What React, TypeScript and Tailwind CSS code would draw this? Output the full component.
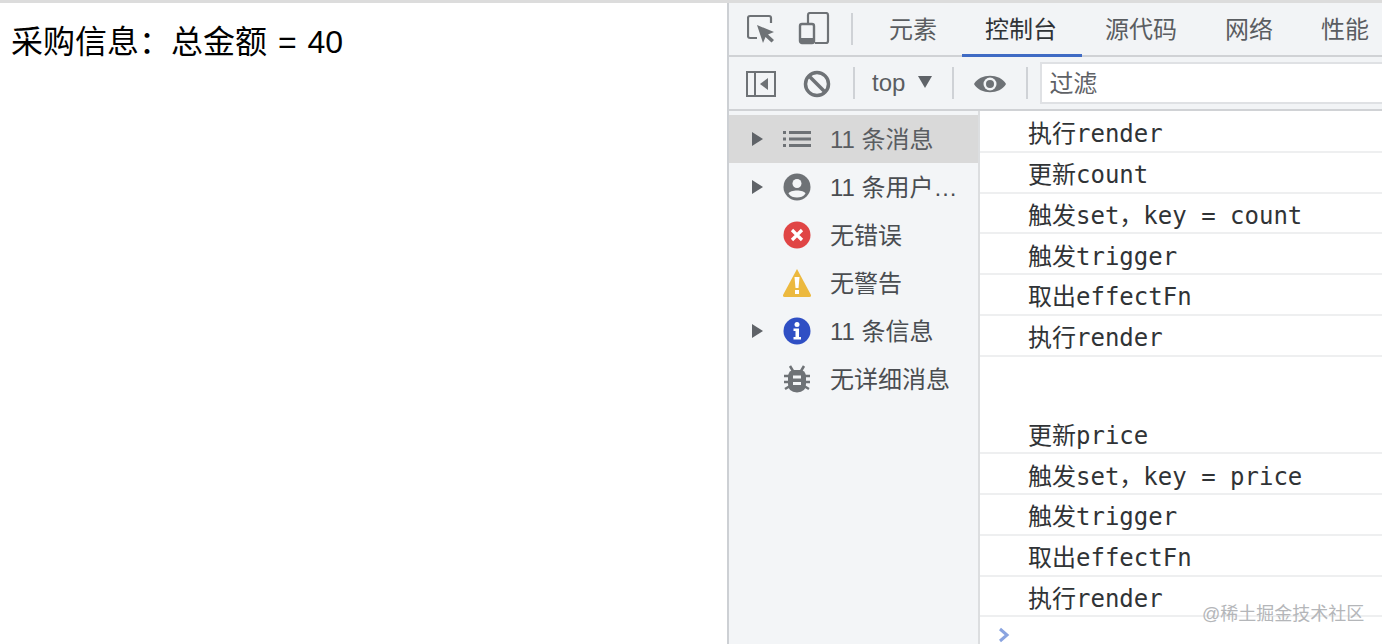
import React from "react";

const cjk = '"Liberation Sans","Noto Sans CJK SC",sans-serif';
const mono = '"DejaVu Sans Mono","Noto Sans CJK SC",monospace';

const Arrow = ({ on }: { on?: boolean }) => (
  <svg width="11" height="14" viewBox="0 0 11 14" className="shrink-0">
    {on && <path d="M0 0 L11 7 L0 14 Z" fill="#5f6368" />}
  </svg>
);

const IconList = () => (
  <svg width="28" height="28" viewBox="0 0 28 28">
    <g fill="#6e7276">
      <rect x="0" y="6" width="3" height="3" />
      <rect x="0" y="12.500" width="3" height="3" />
      <rect x="0" y="19" width="3" height="3" />
      <rect x="6" y="6" width="22" height="3" />
      <rect x="6" y="12.500" width="22" height="3" />
      <rect x="6" y="19" width="22" height="3" />
    </g>
  </svg>
);
const IconUser = () => (
  <svg width="28" height="28" viewBox="0 0 28 28">
    <circle cx="14" cy="14" r="13.500" fill="#6e7276" />
    <circle cx="14" cy="10.500" r="4.500" fill="#f3f5f7" />
    <path d="M5.500 20.500 C7 16.500 21 16.500 22.500 20.500 C20.500 23.500 17.500 24.500 14 24.500 C10.500 24.500 7.500 23.500 5.500 20.500 Z" fill="#f3f5f7" />
  </svg>
);
const IconError = () => (
  <svg width="28" height="28" viewBox="0 0 28 28">
    <circle cx="14" cy="14" r="13.500" fill="#e04545" />
    <path d="M9 9 L19 19 M19 9 L9 19" stroke="#fff" strokeWidth="3.200" />
  </svg>
);
const IconWarn = () => (
  <svg width="30" height="30" viewBox="0 0 30 30">
    <path d="M15 1 L29 27 Q29.500 29 27.500 29 L2.500 29 Q0.500 29 1 27 Z" fill="#ecb93f" />
    <path d="M12.500 9 L17.500 9 L16.500 20 L13.500 20 Z" fill="#fff" />
    <rect x="13" y="22" width="4" height="4" fill="#fff" />
  </svg>
);
const IconInfo = () => (
  <svg width="28" height="28" viewBox="0 0 28 28">
    <circle cx="14" cy="14" r="13.500" fill="#2f4fc4" />
    <circle cx="14" cy="7.500" r="2.500" fill="#fff" />
    <path d="M10.500 11.500 H16 V20 H18 V22.500 H10.500 V20 H12.500 V14 H10.500 Z" fill="#fff" />
  </svg>
);
const IconBug = () => (
  <svg width="28" height="28" viewBox="0 0 28 28">
    <g stroke="#6e7276" strokeWidth="2.500" fill="none">
      <path d="M7 1 L10 6 M21 1 L18 6" />
      <path d="M1 11 H27 M1 17 H27 M2 24 L7 21 M26 24 L21 21" />
    </g>
    <path d="M9 5 H19 Q23 7 23 12 V19 Q23 27 14 27.500 Q5 27 5 19 V12 Q5 7 9 5 Z" fill="#6e7276" />
    <rect x="10" y="10.500" width="8" height="3" fill="#f3f5f7" />
    <rect x="10" y="17" width="8" height="3" fill="#f3f5f7" />
  </svg>
);

const Divider = () => <div className="w-[2px] h-[32px] bg-[#cfd2d6] shrink-0" />;

const SideRow = ({ arrow, icon, text, selected }: { arrow?: boolean; icon: React.ReactNode; text: string; selected?: boolean }) => (
  <div className={`h-[48px] flex items-center pl-[23px] ${selected ? "bg-[#d9d9d9] text-[#5a5d61]" : "text-[#4a4d51]"}`}>
    <Arrow on={arrow} />
    <div className="w-[30px] h-[30px] ml-[19px] flex items-center justify-center shrink-0">{icon}</div>
    <span className="ml-[18px] pt-[2px] text-[24px] leading-[30px] whitespace-nowrap">{text}</span>
  </div>
);

const LogRow = ({ text }: { text: string }) => (
  <div className="h-[40.75px] shrink-0 border-b-2 border-[#eeeff0] pl-[48px] pt-[6px] flex items-center text-[24px] leading-[30px] text-[#303336] whitespace-pre" style={{ fontFamily: mono }}>
    {text}
  </div>
);

export default function App() {
  const first = ["执行render", "更新count", "触发set\uFF0Ckey = count", "触发trigger", "取出effectFn", "执行render"];
  const second = ["更新price", "触发set\uFF0Ckey = price", "触发trigger", "取出effectFn", "执行render"];
  return (
    <div className="w-[1382px] h-[644px] overflow-hidden bg-white flex flex-col relative" style={{ fontFamily: cjk }}>
      <div className="h-[3px] bg-[#dcdcdc] shrink-0" />
      <div className="flex flex-1 min-h-0">
        <div className="w-[729px] shrink-0 pl-[11px] pt-[18px] text-[32px] leading-[42px] text-black whitespace-pre [word-spacing:2px] border-r-2 border-[#cdd0d4]">
          {"采购信息\uFF1A总金额 = 40"}
        </div>
        <div className="flex-1 min-w-0 flex flex-col">
          {/* tab bar */}
          <div className="h-[54px] shrink-0 bg-[#f2f4f6] border-b-2 border-[#d0d2d5] flex items-center pl-[18px] relative">
            <svg width="30" height="30" viewBox="0 0 30 30" className="shrink-0">
              <path d="M10 24 H3 Q1 24 1 22 V4 Q1 2 3 2 H22 Q24 2 24 4 V9" fill="none" stroke="#6e7276" strokeWidth="2.200" />
              <path d="M10 11 L27 18 L21 20.500 L27 26 L24.500 28.500 L18.500 23 L16 29 Z" fill="#6e7276" />
            </svg>
            <svg width="32" height="34" viewBox="0 0 32 34" className="ml-[21px] shrink-0">
              <path d="M10 12 V3 Q10 1 12 1 H28 Q30 1 30 3 V29 Q30 31 28 31 H17" fill="none" stroke="#6e7276" strokeWidth="2.200" />
              <rect x="2" y="12" width="14" height="19" rx="2" fill="none" stroke="#6e7276" strokeWidth="2.400" />
              <rect x="2" y="26" width="14" height="5" fill="#6e7276" />
            </svg>
            <div className="ml-[21px]"><Divider /></div>
            <div className="ml-[12px] flex h-full text-[24px] text-[#5a5d61]">
              <div className="w-[96px] pt-[2px] flex items-center justify-center">元素</div>
              <div className="w-[120px] pt-[2px] flex items-center justify-center text-[#303336] relative">
                控制台
                <div className="absolute left-[1px] right-[-1px] bottom-[-2px] h-[3px] bg-[#3f6bc4]" />
              </div>
              <div className="w-[120px] pt-[2px] flex items-center justify-center">源代码</div>
              <div className="w-[96px] pt-[2px] flex items-center justify-center">网络</div>
              <div className="w-[96px] pt-[2px] flex items-center justify-center">性能</div>
            </div>
          </div>
          {/* toolbar */}
          <div className="h-[54px] shrink-0 bg-[#f2f4f6] border-b-2 border-[#d0d2d5] flex items-center pl-[17px]">
            <svg width="30" height="26" viewBox="0 0 30 26" className="mt-[2px] shrink-0">
              <rect x="1" y="1" width="28" height="24" fill="none" stroke="#6e7276" strokeWidth="2" />
              <rect x="8" y="1" width="2" height="24" fill="#6e7276" />
              <path d="M22 7 V19 L14 13 Z" fill="#6e7276" />
            </svg>
            <svg width="28" height="28" viewBox="0 0 28 28" className="mt-[2px] ml-[27px] shrink-0">
              <circle cx="14" cy="14" r="11.500" fill="none" stroke="#6e7276" strokeWidth="3.500" />
              <path d="M6 6 L22 22" stroke="#6e7276" strokeWidth="3.500" />
            </svg>
            <div className="ml-[22px]"><Divider /></div>
            <span className="ml-[17px] text-[24px] text-[#5a5d61] leading-[30px]">top</span>
            <svg width="14" height="12" viewBox="0 0 14 12" className="ml-[13px] mb-[2px] shrink-0">
              <path d="M0 0 H14 L7 12 Z" fill="#5f6368" />
            </svg>
            <div className="ml-[20px]"><Divider /></div>
            <svg width="32" height="22" viewBox="0 0 32 22" className="mt-[2px] ml-[20px] shrink-0">
              <path d="M0 11 C6 0 26 0 32 11 C26 22 6 22 0 11 Z" fill="#6e7276" />
              <circle cx="16" cy="11" r="6.500" fill="#f2f4f6" />
              <circle cx="16" cy="11" r="4" fill="#6e7276" />
            </svg>
            <div className="ml-[20px]"><Divider /></div>
            <div className="ml-[12px] flex-1 h-[42px] bg-white border-2 border-r-0 border-[#dfe1e4] pl-[7px] pt-[2px] flex items-center text-[24px] text-[#5f6266]">
              过滤
            </div>
          </div>
          {/* body */}
          <div className="flex-1 min-h-0 flex">
            <div className="w-[251px] shrink-0 bg-[#f3f5f7] border-r-2 border-[#dcdee0] pt-[4px]">
              <SideRow selected arrow icon={<IconList />} text="11 条消息" />
              <SideRow arrow icon={<IconUser />} text="11 条用户…" />
              <SideRow icon={<IconError />} text="无错误" />
              <SideRow icon={<IconWarn />} text="无警告" />
              <SideRow arrow icon={<IconInfo />} text="11 条信息" />
              <SideRow icon={<IconBug />} text="无详细消息" />
            </div>
            <div className="flex-1 min-w-0 flex flex-col pt-[1px]">
              {first.map((t, i) => (
                <LogRow key={i} text={t} />
              ))}
              <div className="h-[57px] shrink-0" />
              {second.map((t, i) => (
                <LogRow key={i} text={t} />
              ))}
              <div className="pl-[17px] pt-[10px]">
                <svg width="14" height="16" viewBox="0 0 14 16">
                  <path d="M3 2 L10 8 L3 14" fill="none" stroke="#8aa4e0" strokeWidth="3" />
                </svg>
              </div>
            </div>
          </div>
        </div>
      </div>
      <div className="absolute left-[1202px] top-[603px] text-[18px] leading-[22px] text-[#b4b6b9] whitespace-nowrap">
        @稀土掘金技术社区
      </div>
    </div>
  );
}
